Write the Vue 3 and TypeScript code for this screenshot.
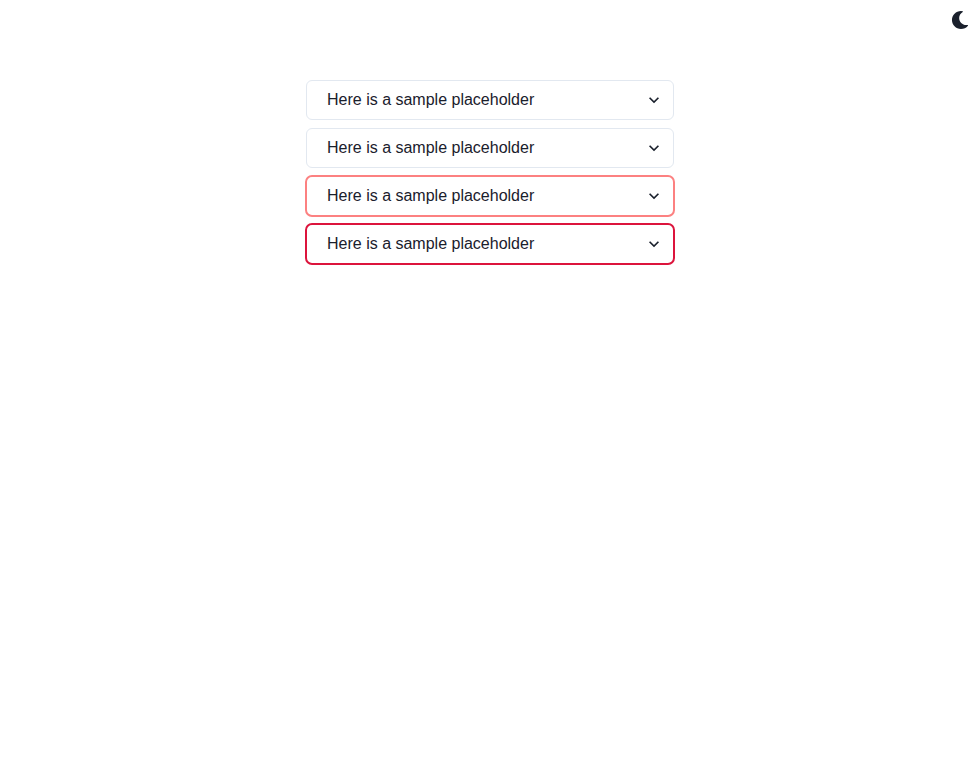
<script setup lang="ts">
interface SelectVariant {
  id: string
  tone: string
}

const placeholder: string = 'Here is a sample placeholder'

const selects: SelectVariant[] = [
  { id: 'default', tone: 'default' },
  { id: 'focus', tone: 'default' },
  { id: 'soft-error', tone: 'soft' },
  { id: 'strong-error', tone: 'strong' },
]
</script>

<template>
  <div class="page">
    <header class="toolbar">
      <button class="theme-toggle" type="button" aria-label="Switch to dark mode">
        <svg viewBox="0 0 512 512" aria-hidden="true">
          <path
            fill="currentColor"
            d="M283.211 512c78.962 0 151.079-35.925 198.857-94.792 7.068-8.708-.639-21.43-11.562-19.35-124.203 23.654-238.262-71.576-238.262-196.954 0-72.222 38.662-138.635 101.498-174.394 9.686-5.512 7.25-20.197-3.756-22.23A258.156 258.156 0 0 0 283.211 0c-141.309 0-256 114.511-256 256 0 141.309 114.511 256 256 256z"
          />
        </svg>
      </button>
    </header>
    <main class="stack">
      <div v-for="item in selects" :key="item.id" class="field">
        <select class="select" :class="item.tone">
          <option value="">{{ placeholder }}</option>
        </select>
        <span class="chevron">
          <svg viewBox="0 0 24 24" aria-hidden="true">
            <path fill="currentColor" d="M16.59 8.59L12 13.17 7.41 8.59 6 10l6 6 6-6z" />
          </svg>
        </span>
      </div>
    </main>
  </div>
</template>

<style>
body {
  margin: 0;
  background: #fff;
}
</style>

<style scoped>
.page {
  min-height: 100vh;
  color: #1a202c;
  font-family: "Liberation Sans", Arial, sans-serif;
  font-size: 16px;
  line-height: 24px;
}
.toolbar {
  display: flex;
  justify-content: flex-end;
  height: 40px;
}
.theme-toggle {
  display: flex;
  align-items: center;
  justify-content: center;
  width: 40px;
  height: 40px;
  padding: 0;
  border: 0;
  background: transparent;
  color: inherit;
}
.theme-toggle svg {
  width: 18px;
  height: 18px;
}
.stack {
  display: flex;
  flex-direction: column;
  gap: 8px;
  width: 368px;
  margin: 40px auto 0;
}
.field {
  position: relative;
  display: flex;
  height: 40px;
}
.select {
  box-sizing: border-box;
  flex: 1;
  height: 40px;
  margin: 0;
  padding: 0 32px 1px 20px;
  appearance: none;
  border: 1px solid #e2e8f0;
  border-radius: 6px;
  outline: 0;
  background: transparent;
  color: inherit;
  font: inherit;
}
.soft,
.strong {
  height: 42px;
  margin: -1px;
  border-width: 2px;
  border-radius: 7px;
}
.soft {
  border-color: #fc8181;
}
.strong {
  border-color: crimson;
}
.chevron {
  position: absolute;
  top: 0;
  right: 8px;
  display: flex;
  align-items: center;
  justify-content: center;
  width: 24px;
  height: 100%;
  pointer-events: none;
}
.chevron svg {
  width: 20px;
  height: 20px;
}
</style>
